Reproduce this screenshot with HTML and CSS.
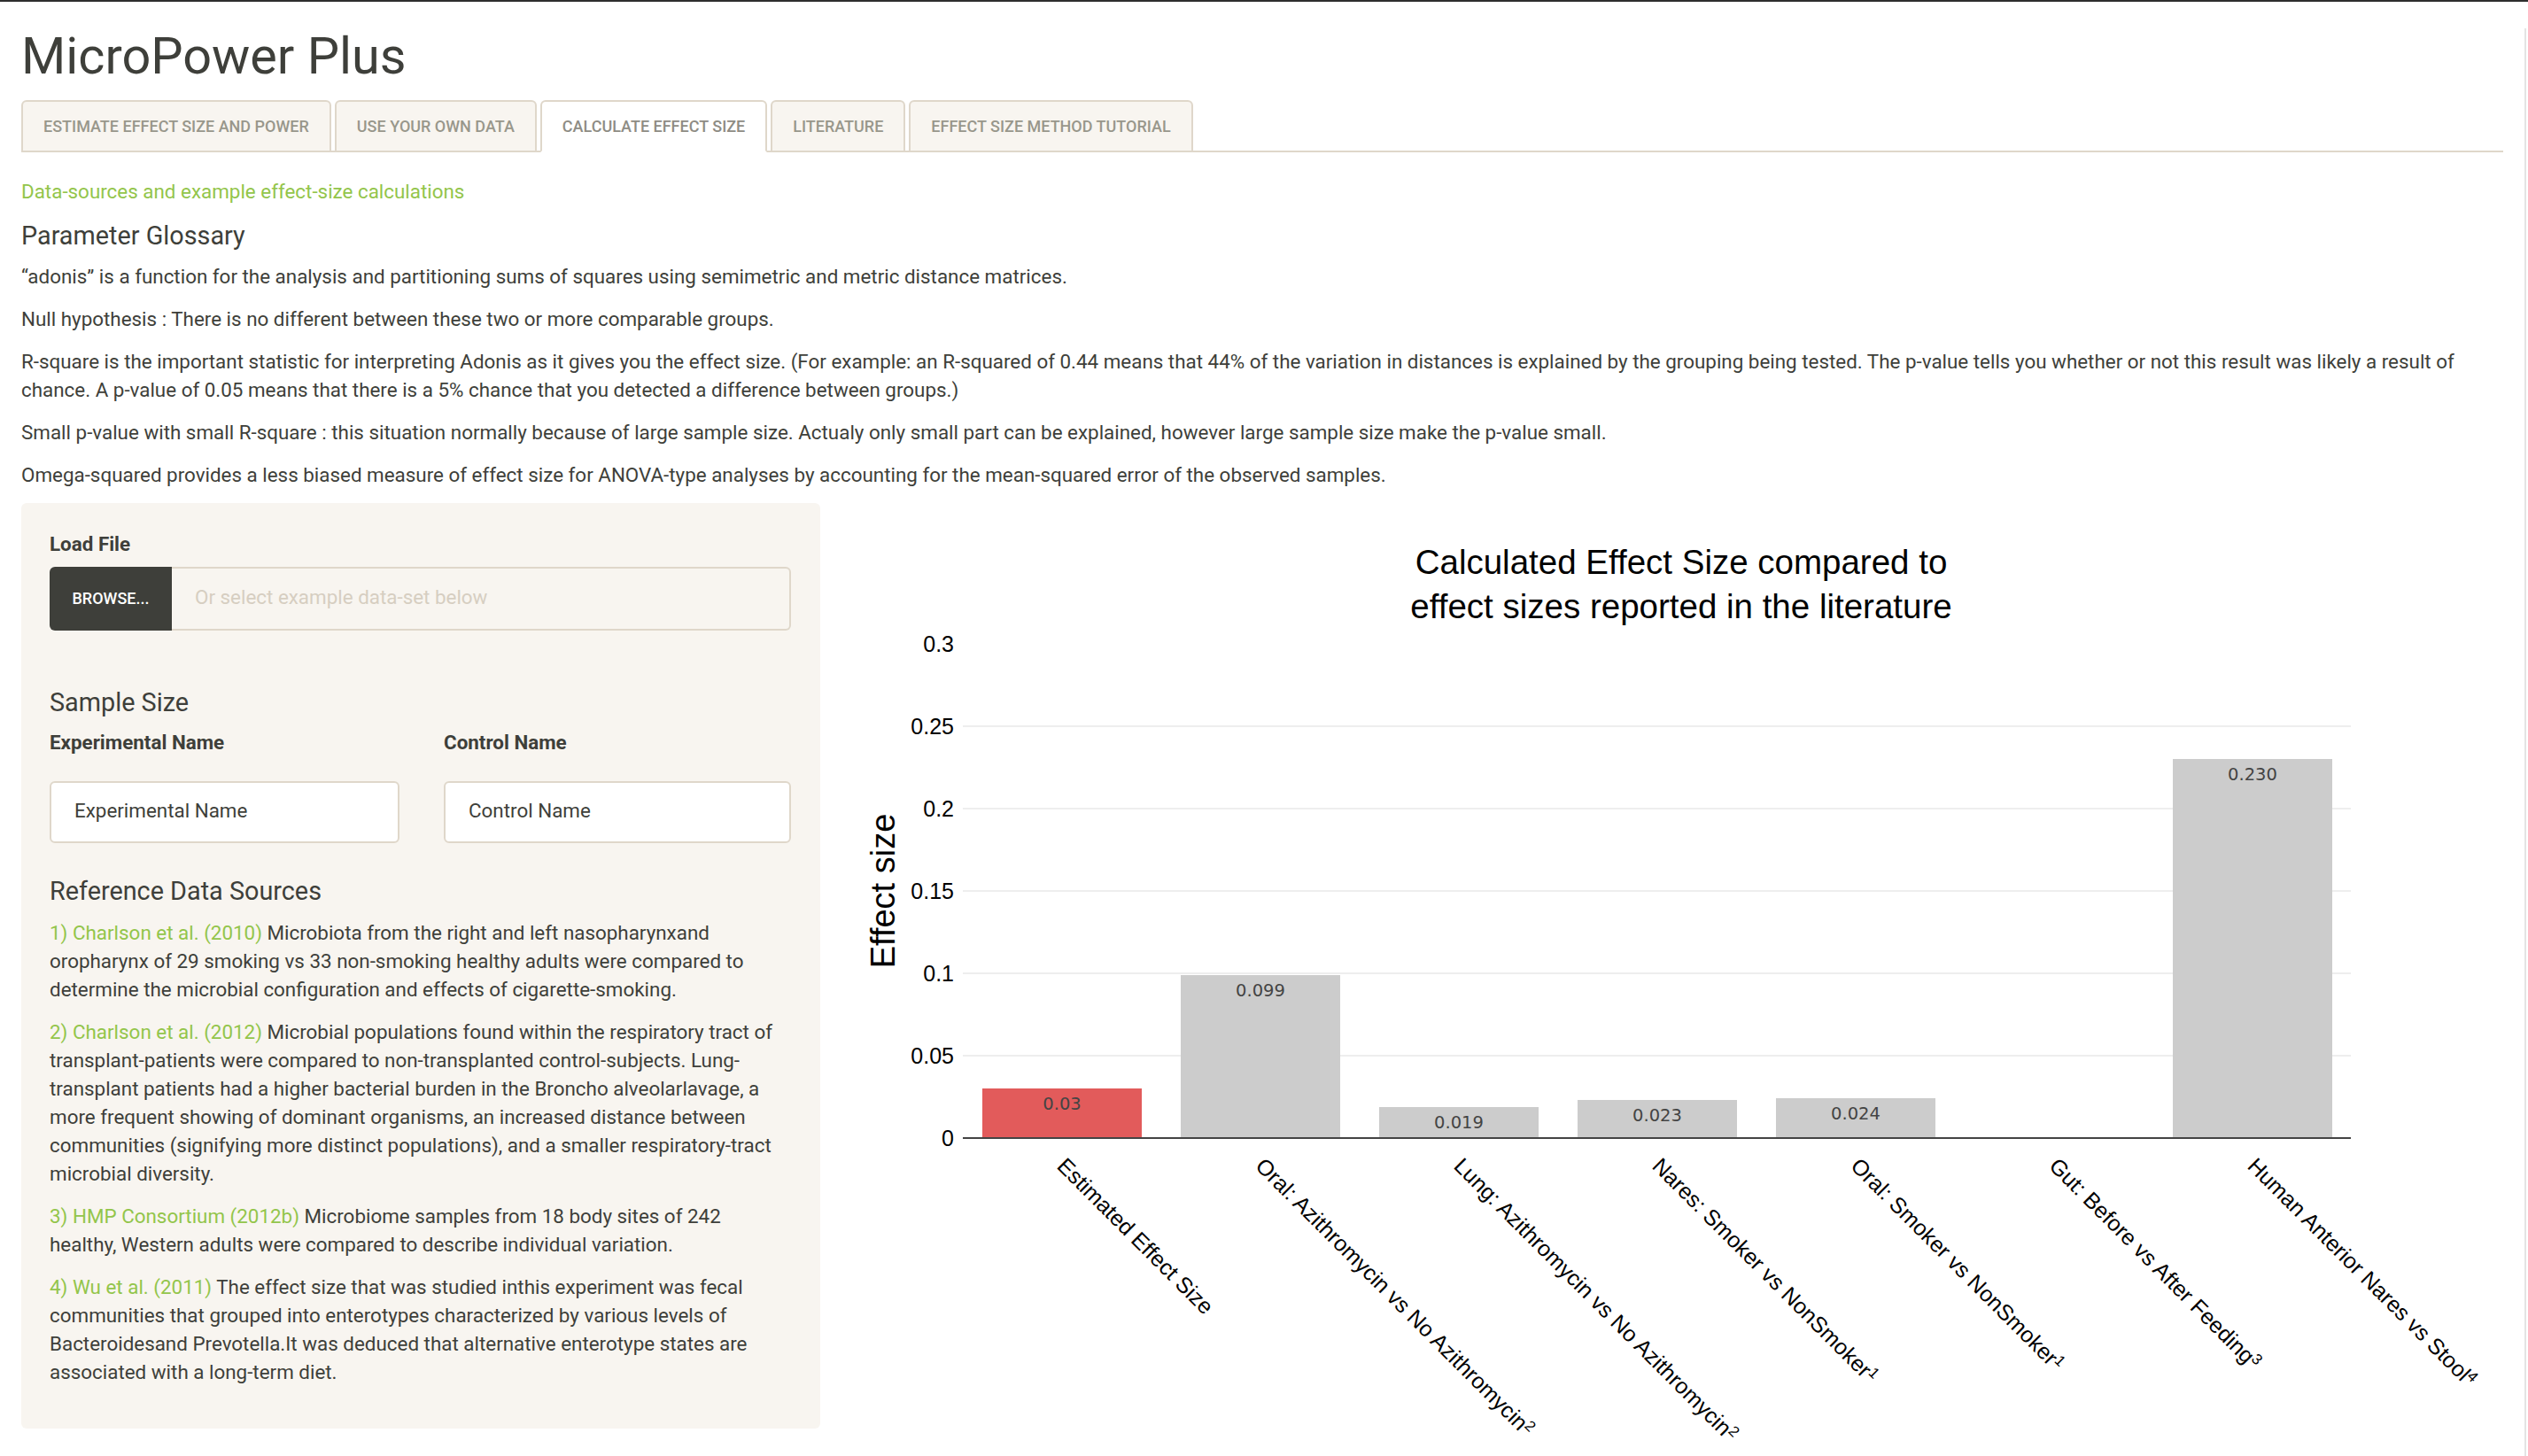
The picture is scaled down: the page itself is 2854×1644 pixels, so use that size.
FILE: index.html
```html
<!DOCTYPE html>
<html lang="en">
<head>
<meta charset="utf-8">
<title>MicroPower Plus</title>
<link rel="stylesheet" href="styles.css">
</head>
<body>
<div class="page">
  <h1 class="app-title">MicroPower Plus</h1>
  <ul class="tabs">
    <li class="tab"><a class="tab-link">Estimate Effect Size and Power</a></li>
    <li class="tab"><a class="tab-link">Use Your Own Data</a></li>
    <li class="tab tab-active"><a class="tab-link">Calculate Effect Size</a></li>
    <li class="tab"><a class="tab-link">Literature</a></li>
    <li class="tab"><a class="tab-link">Effect Size Method Tutorial</a></li>
  </ul>

  <div class="tab-pane">
    <a class="sources-link">Data-sources and example effect-size calculations</a>
    <h4 class="section-title glossary-title">Parameter Glossary</h4>
    <p>“adonis” is a function for the analysis and partitioning sums of squares using semimetric and metric distance matrices.</p>
    <p>Null hypothesis : There is no different between these two or more comparable groups.</p>
    <p>R-square is the important statistic for interpreting Adonis as it gives you the effect size. (For example: an R-squared of 0.44 means that 44% of the variation in distances is explained by the grouping being tested. The p-value tells you whether or not this result was likely a result of chance. A p-value of 0.05 means that there is a 5% chance that you detected a difference between groups.)</p>
    <p>Small p-value with small R-square : this situation normally because of large sample size. Actualy only small part can be explained, however large sample size make the p-value small.</p>
    <p>Omega-squared provides a less biased measure of effect size for ANOVA-type analyses by accounting for the mean-squared error of the observed samples.</p>

    <div class="layout-row">
      <aside class="well">
        <div class="field-label">Load File</div>
        <div class="file-group">
          <span class="browse-btn">Browse...</span>
          <span class="file-input">Or select example data-set below</span>
        </div>

        <h4 class="section-title sample-title">Sample Size</h4>
        <div class="name-grid">
          <div class="name-field">
            <div class="field-label name-label">Experimental Name</div>
            <div class="text-input">Experimental Name</div>
          </div>
          <div class="name-field">
            <div class="field-label name-label">Control Name</div>
            <div class="text-input">Control Name</div>
          </div>
        </div>

        <h4 class="section-title refs-title">Reference Data Sources</h4>
        <p class="ref"><a class="cite">1) Charlson et al. (2010)</a> Microbiota from the right and left nasopharynxand oropharynx of 29 smoking vs 33 non-smoking healthy adults were compared to determine the microbial configuration and effects of cigarette-smoking.</p>
        <p class="ref"><a class="cite">2) Charlson et al. (2012)</a> Microbial populations found within the respiratory tract of transplant-patients were compared to non-transplanted control-subjects. Lung-transplant patients had a higher bacterial burden in the Broncho alveolarlavage, a more frequent showing of dominant organisms, an increased distance between communities (signifying more distinct populations), and a smaller respiratory-tract microbial diversity.</p>
        <p class="ref"><a class="cite">3) HMP Consortium (2012b)</a> Microbiome samples from 18 body sites of 242 healthy, Western adults were compared to describe individual variation.</p>
        <p class="ref"><a class="cite">4) Wu et al. (2011)</a> The effect size that was studied inthis experiment was fecal communities that grouped into enterotypes characterized by various levels of Bacteroidesand Prevotella.It was deduced that alternative enterotype states are associated with a long-term diet.</p>
      </aside>

      <div class="chart-col">
        <svg class="chart" width="1852" height="1074" viewBox="0 0 1852 1074">
          <g class="chart-title">
            <text x="924" y="80">Calculated Effect Size compared to</text>
            <text x="924" y="130">effect sizes reported in the literature</text>
          </g>
          <g class="grid">
            <line x1="113" x2="1680" y1="624" y2="624"/>
            <line x1="113" x2="1680" y1="531" y2="531"/>
            <line x1="113" x2="1680" y1="438" y2="438"/>
            <line x1="113" x2="1680" y1="345" y2="345"/>
            <line x1="113" x2="1680" y1="252" y2="252"/>
          </g>
          <g class="yticks">
            <text x="103" y="726">0</text>
            <text x="103" y="633">0.05</text>
            <text x="103" y="540">0.1</text>
            <text x="103" y="447">0.15</text>
            <text x="103" y="354">0.2</text>
            <text x="103" y="261">0.25</text>
            <text x="103" y="168">0.3</text>
          </g>
          <text class="y-title" transform="translate(36,438) rotate(-90)">Effect size</text>
          <g class="bars">
            <rect class="bar-est" x="135" y="661" width="180" height="56"/>
            <rect class="bar-lit" x="359" y="533" width="180" height="184"/>
            <rect class="bar-lit" x="583" y="682" width="180" height="35"/>
            <rect class="bar-lit" x="807" y="674" width="180" height="43"/>
            <rect class="bar-lit" x="1031" y="672" width="180" height="45"/>
            <rect class="bar-lit" x="1479" y="289" width="180" height="428"/>
          </g>
          <g class="bar-values">
            <text x="225" y="685">0.03</text>
            <text x="449" y="557">0.099</text>
            <text x="673" y="706">0.019</text>
            <text x="897" y="698">0.023</text>
            <text x="1121" y="696">0.024</text>
            <text x="1569" y="313">0.230</text>
          </g>
          <line class="zero-line" x1="113" x2="1680" y1="717" y2="717"/>
          <g class="xticks">
            <text transform="translate(218,750) rotate(45)">Estimated Effect Size</text>
            <text transform="translate(442,750) rotate(45)">Oral: Azithromycin vs No Azithromycin<tspan class="sup" dy="-8">2</tspan></text>
            <text transform="translate(666,750) rotate(45)">Lung: Azithromycin vs No Azithromycin<tspan class="sup" dy="-8">2</tspan></text>
            <text transform="translate(890,750) rotate(45)">Nares: Smoker vs NonSmoker<tspan class="sup" dy="-8">1</tspan></text>
            <text transform="translate(1114,750) rotate(45)">Oral: Smoker vs NonSmoker<tspan class="sup" dy="-8">1</tspan></text>
            <text transform="translate(1338,750) rotate(45)">Gut: Before vs After Feeding<tspan class="sup" dy="-8">3</tspan></text>
            <text transform="translate(1562,750) rotate(45)">Human Anterior Nares vs Stool<tspan class="sup" dy="-8">4</tspan></text>
          </g>
        </svg>
      </div>
    </div>
  </div>
</div>
</body>
</html>
```

FILE: styles.css
```css
html, body {
  margin: 0;
  padding: 0;
  height: 1644px;
  overflow: hidden;
  background: #ffffff;
}

body {
  box-sizing: border-box;
  border-top: 2px solid #2e2e2e;
  font-family: Roboto, "Helvetica Neue", "Liberation Sans", Arial, sans-serif;
  font-size: 22.4px;
  line-height: 32px;
  color: #3E3F3A;
}

.page {
  width: 2802px;
  padding: 0 24px;
  min-height: 1642px;
  border-right: 2px solid #e4e4e4;
  box-sizing: content-box;
}

.app-title {
  margin: 30px 0 18px;
  font-size: 57.6px;
  line-height: 63.4px;
  font-weight: 400;
  color: #3E3F3A;
}

/* Tabs */
.tabs {
  display: flex;
  gap: 4px;
  list-style: none;
  margin: 0;
  padding: 0;
  border-bottom: 2px solid #DFD7CA;
}

.tab {
  margin-bottom: -2px;
}

.tab-link {
  display: block;
  box-sizing: border-box;
  height: 59px;
  line-height: 55px;
  padding: 0 23px;
  border: 2px solid #DFD7CA;
  border-radius: 6px 6px 0 0;
  background: #F8F5F0;
  color: #98978B;
  font-size: 18px;
  font-weight: 500;
  text-transform: uppercase;
  white-space: nowrap;
}

.tab-active .tab-link {
  background: #ffffff;
  border-bottom-color: transparent;
  color: #8E8C84;
}

/* Tab content */
.tab-pane {
  padding-top: 28px;
}

.sources-link {
  display: block;
  color: #93C54B;
  text-decoration: none;
}

.section-title {
  font-size: 28.8px;
  line-height: 31.7px;
  font-weight: 400;
  color: #3E3F3A;
}

.glossary-title {
  margin: 19px 0 13px;
}

p {
  margin: 0 0 16px;
}

.layout-row {
  display: flex;
  align-items: flex-start;
  gap: 48px;
  margin-top: 3px;
}

/* Sidebar well */
.well {
  flex: 0 0 902px;
  box-sizing: border-box;
  padding: 30px 33px 32px 32px;
  background: #F8F5F0;
  border-radius: 6px;
}

.field-label {
  font-weight: 700;
  margin-bottom: 10px;
}

.file-group {
  display: flex;
  height: 72px;
  margin-bottom: 66px;
}

.browse-btn {
  flex: 0 0 138px;
  display: flex;
  align-items: center;
  justify-content: center;
  background: #3E3F3A;
  color: #ffffff;
  border-radius: 6px 0 0 6px;
  font-size: 18px;
  font-weight: 500;
  text-transform: uppercase;
}

.file-input {
  flex: 1;
  display: flex;
  align-items: center;
  padding: 0 0 4px 26px;
  border: 2px solid #DFD7CA;
  border-left: none;
  border-radius: 0 6px 6px 0;
  color: #d6cec1;
}

.sample-title {
  margin: 0 0 12px;
}

.name-grid {
  display: grid;
  grid-template-columns: 395px 392px;
  column-gap: 50px;
  margin-bottom: 39px;
}

.name-label {
  margin-bottom: 28px;
}

.text-input {
  box-sizing: border-box;
  height: 70px;
  display: flex;
  align-items: center;
  padding: 0 0 4px 26px;
  background: #ffffff;
  border: 2px solid #DFD7CA;
  border-radius: 6px;
  color: #3E3F3A;
}

.refs-title {
  margin: 0 0 14px;
}

.cite {
  color: #93C54B;
  text-decoration: none;
}

/* Chart */
.chart-col {
  flex: 1;
}

.chart {
  display: block;
  font-family: "Liberation Sans", Arial, sans-serif;
}

.chart-title text {
  font-size: 38.5px;
  fill: #000000;
  text-anchor: middle;
}

.grid line {
  stroke: #eeeeee;
  stroke-width: 2;
}

.zero-line {
  stroke: #444444;
  stroke-width: 2;
}

.yticks text {
  font-size: 25px;
  fill: #000000;
  text-anchor: end;
}

.y-title {
  font-size: 38px;
  fill: #000000;
  text-anchor: middle;
}

.bar-est {
  fill: #E25B5B;
}

.bar-lit {
  fill: #CCCCCC;
}

.bar-values text {
  font-family: "DejaVu Sans", Verdana, sans-serif;
  font-size: 19.5px;
  fill: #444444;
  text-anchor: middle;
}

.xticks text {
  font-size: 25px;
  fill: #000000;
}

.xticks .sup {
  font-size: 17px;
}
```
